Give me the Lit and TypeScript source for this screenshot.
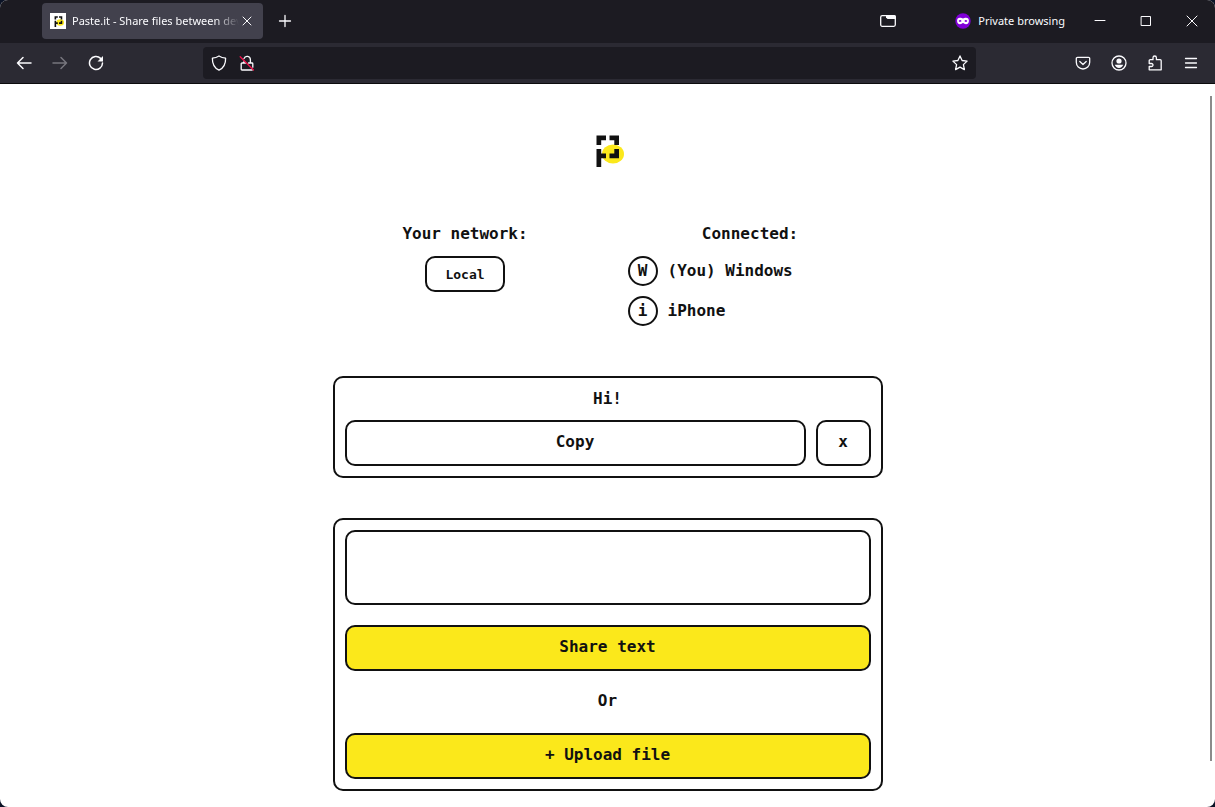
import { LitElement, html, css, svg } from "lit";
import { customElement, property, state } from "lit/decorators.js";

const markShapes = svg`
  <ellipse cx="17" cy="19" rx="11" ry="9.500" fill="#fbe81b"/>
  <path fill="#111" d="M.5.5H10v4.800H5.200V10H.5zM13.500.5H23V10h-4.700V5.300h-4.800zM.5 14h4.700v4.500H10v4.700H5.200V32H.5zM18.300 14H23v9.200h-9.500v-4.700h4.800z"/>`;

@customElement("paste-mark")
class PasteMark extends LitElement {
  static styles = css`
    :host { display: block; }
    .mark { display: block; width: 100%; height: 100%; overflow: visible; }
  `;
  render() {
    return html`<svg class="mark" viewBox="0 0 24 32" aria-hidden="true">${markShapes}</svg>`;
  }
}

@customElement("browser-bar")
class BrowserBar extends LitElement {
  @property() pageTitle = "";

  static styles = css`
    :host {
      display: block;
      color: #fbfbfe;
      font: 12px/16px "Noto Sans", "Open Sans", sans-serif;
    }
    button {
      display: grid;
      place-items: center;
      border: 0;
      padding: 0;
      background: none;
      color: inherit;
      font: inherit;
    }
    svg { display: block; fill: none; stroke: currentColor; stroke-width: 1.3; stroke-linecap: round; stroke-linejoin: round; }
    .tabs { display: flex; align-items: center; height: 42px; padding: 0 0 1px 42px; background: #1c1b22; }
    .tab {
      display: flex;
      align-items: center;
      box-sizing: border-box;
      width: 221px;
      height: 36px;
      padding: 0 8px;
      border-radius: 4px;
      background: #42414d;
    }
    .favicon { display: grid; place-items: center; flex: none; width: 16px; height: 16px; background: #fff; }
    .favicon paste-mark { width: 9px; height: 11px; }
    .title {
      flex: 1;
      min-width: 0;
      margin-left: 6px;
      overflow: hidden;
      white-space: nowrap;
      font-size: 11px;
      mask-image: linear-gradient(to left, transparent, #000 24px);
    }
    .close { width: 16px; height: 16px; }
    .new { width: 44px; height: 36px; }
    .space { flex: 1; }
    .list { width: 32px; height: 36px; margin-right: 51px; }
    .private { display: flex; align-items: center; gap: 7px; margin-right: 12px; font-size: 11px; }
    .window { width: 46px; height: 42px; }
    .tools {
      display: flex;
      align-items: center;
      height: 40px;
      padding: 0 6px;
      border-bottom: 1px solid #0c0c0d;
      background: #2b2a33;
    }
    .tool { width: 36px; height: 32px; }
    .dim { color: #77767e; }
    .address {
      display: flex;
      align-items: center;
      flex: 1;
      height: 32px;
      margin: 0 89px;
      padding: 0 2px;
      border-radius: 4px;
      background: #1c1b22;
    }
    .small { width: 28px; height: 28px; }
    .url { flex: 1; min-width: 0; border: 0; outline: 0; background: none; color: inherit; font: inherit; }
    .thin { stroke-width: 1; }
    .thick { stroke-width: 1.5; }
  `;

  render() {
    return html`
      <div class="tabs">
        <div class="tab">
          <span class="favicon"><paste-mark></paste-mark></span>
          <span class="title">${this.pageTitle}</span>
          <button class="close" aria-label="Close tab">
            <svg width="16" height="16"><path class="thin" d="M4 4l8 8M12 4l-8 8"/></svg>
          </button>
        </div>
        <button class="new" aria-label="New tab">
          <svg width="16" height="16"><path d="M8 2.500v11M2.500 8h11"/></svg>
        </button>
        <span class="space"></span>
        <button class="list" aria-label="List all tabs">
          <svg width="16" height="16"><rect x=".7" y="2.700" width="14.600" height="10.600" rx="1.500"/><path fill="currentColor" stroke="none" d="M6 2h8a2 2 0 0 1 2 2v2H7.500L6 4.500z"/></svg>
        </button>
        <span class="private">
          <svg width="16" height="16"><circle cx="8" cy="8" r="7.700" fill="#8000d7" stroke="none"/><path fill="#fff" fill-rule="evenodd" stroke="none" d="M5 4.800c1.300 0 2.100.7 3 .7s1.700-.7 3-.7c2 0 2.900 1.200 2.900 3 0 2-1.100 3.400-2.900 3.400-1.400 0-2.100-1.300-3-1.300s-1.600 1.300-3 1.300c-1.800 0-2.900-1.400-2.900-3.400 0-1.800.9-3 2.900-3zM3.600 8c.5.700 1 .9 1.500.9S6.200 8.700 6.500 8c-.3-.7-.9-.9-1.400-.9S4 7.300 3.600 8zm5.900 0c.3.700.9.900 1.400.9s1-.2 1.500-.9c-.5-.7-1-.9-1.500-.9s-1.100.2-1.400.9z"/></svg>
          Private browsing
        </span>
        <button class="window" aria-label="Minimize">
          <svg width="12" height="12"><path class="thin" d="M1 5.500h10"/></svg>
        </button>
        <button class="window" aria-label="Maximize">
          <svg width="12" height="12"><path class="thin" d="M1.500 1.500h9v9h-9z"/></svg>
        </button>
        <button class="window" aria-label="Close window">
          <svg width="12" height="12"><path class="thin" d="M1 1l10 10M11 1L1 11"/></svg>
        </button>
      </div>
      <div class="tools">
        <button class="tool" aria-label="Back">
          <svg width="16" height="16"><path class="thick" d="M15 8H1.500M7 2.500L1.500 8 7 13.500"/></svg>
        </button>
        <button class="tool dim" aria-label="Forward">
          <svg width="16" height="16"><path class="thick" d="M1 8h13.500M9 2.500L14.500 8 9 13.500"/></svg>
        </button>
        <button class="tool" aria-label="Reload">
          <svg width="16" height="16"><path class="thick" d="M12.600 3.400A6.500 6.500 0 1 0 14.500 8"/><path fill="currentColor" stroke="none" d="M15 1v5.500H9.500z"/></svg>
        </button>
        <div class="address">
          <button class="small" aria-label="Tracking protection">
            <svg width="16" height="16"><path d="M8 1c2 1.300 4.300 2 6.600 2.200C14.800 8.800 12.500 13 8 15.200 3.500 13 1.200 8.800 1.400 3.200 3.700 3 6 2.300 8 1z"/></svg>
          </button>
          <button class="small" aria-label="Connection is not secure">
            <svg width="16" height="16"><path d="M6.500 8H3a.8.8 0 0 0-.8.8v5.400c0 .4.400.8.8.8h10.200M9.500 8H13c.4 0 .8.400.8.800v3.400M4.700 8V6.800M5 3.600a3.300 3.300 0 0 1 6.400 1.100V8"/><path stroke="#f0134c" d="M1.200 1.800L14.500 15"/></svg>
          </button>
          <input class="url" type="text" aria-label="Address" />
          <button class="small" aria-label="Bookmark this page">
            <svg width="16" height="16"><path d="M8 .9l2.100 4.600 5 .6-3.700 3.500 1 5L8 12.100l-4.400 2.500 1-5L.9 6.100l5-.6z"/></svg>
          </button>
        </div>
        <button class="tool" aria-label="Save to Pocket">
          <svg width="16" height="16"><path d="M2.500 2.300h11a1.200 1.200 0 0 1 1.200 1.200v3.800a6.700 6.700 0 0 1-13.400 0V3.500a1.200 1.200 0 0 1 1.200-1.200zM4.800 6.500L8 9.500l3.200-3"/></svg>
        </button>
        <button class="tool" aria-label="Account">
          <svg width="16" height="16"><circle cx="8" cy="8" r="7"/><circle cx="8" cy="6" r="2.600" fill="currentColor" stroke="none"/><path fill="currentColor" stroke="none" d="M3.800 9.800h8.400c-.6 2-2.100 3.100-4.200 3.100S4.400 11.800 3.800 9.800z"/></svg>
        </button>
        <button class="tool" aria-label="Extensions">
          <svg width="16" height="16"><path d="M6 4.700V2.700a1.700 1.700 0 0 1 3.400 0v2h3.800a1 1 0 0 1 1 1v9.100H2.200v-3.300h2.300a1.500 1.500 0 0 0 0-3H2.200V5.700a1 1 0 0 1 1-1z"/></svg>
        </button>
        <button class="tool" aria-label="Menu">
          <svg width="16" height="16"><path d="M2.500 3.500h11M2.500 8h11M2.500 12.500h11"/></svg>
        </button>
      </div>
    `;
  }
}

@customElement("app-root")
class AppRoot extends LitElement {
  @state() private devices = [
    { initial: "W", name: "(You) Windows" },
    { initial: "i", name: "iPhone" },
  ];

  static styles = css`
    :host {
      display: block;
      background: #0b1326;
      color: #111;
      font: bold 16px/24px "DejaVu Sans Mono", monospace;
    }
    .frame {
      display: flex;
      flex-direction: column;
      min-height: 100vh;
      border-radius: 8px;
      overflow: hidden;
      background: #fff;
    }
    .page { position: relative; flex: 1; padding: 51px 0 16px; }
    .scroll { position: absolute; top: 12px; right: 3px; bottom: 46px; width: 2px; background: #8b8b8b; }
    .logo { width: 24px; height: 32px; margin: 0 auto; }
    .info {
      display: grid;
      grid-template-columns: 1fr 1fr;
      max-width: 570px;
      margin: 55px auto 50px;
    }
    h2 { margin: 0 0 10px; font: inherit; text-align: center; }
    .network { display: flex; flex-direction: column; align-items: center; }
    button, textarea {
      box-sizing: border-box;
      border: 2px solid #111;
      border-radius: 10px;
      background: #fff;
      color: inherit;
      font: inherit;
    }
    button { height: 46px; padding: 0 0 2px; }
    .local { width: 80px; height: 36px; padding: 2px 0 0; font-size: 13px; }
    .devices { display: flex; flex-direction: column; gap: 10px; margin: 0; padding: 0 0 0 20px; list-style: none; }
    .device { display: flex; align-items: center; gap: 10px; }
    .initial {
      display: grid;
      place-items: center;
      box-sizing: border-box;
      width: 30px;
      height: 30px;
      border: 2px solid #111;
      border-radius: 50%;
    }
    .card {
      display: flex;
      flex-direction: column;
      box-sizing: border-box;
      max-width: 550px;
      margin: 0 auto 40px;
      padding: 10px;
      border: 2px solid #111;
      border-radius: 10px;
    }
    .card:last-of-type { margin-bottom: 0; }
    p { margin: 0; text-align: center; line-height: 22px; }
    .message { padding-bottom: 10px; }
    .actions { display: flex; gap: 10px; }
    .copy { flex: 1; }
    .remove { width: 55px; }
    textarea { display: block; width: 100%; height: 75px; margin-bottom: 20px; padding: 8px; resize: none; }
    .yellow { background: #fbe81b; }
    .or { padding: 19px 0 21px; }
  `;

  render() {
    return html`
      <div class="frame">
        <browser-bar pageTitle="Paste.it - Share files between devices"></browser-bar>
        <main class="page">
          <paste-mark class="logo"></paste-mark>
          <div class="info">
            <section class="network">
              <h2>Your network:</h2>
              <button class="local">Local</button>
            </section>
            <section>
              <h2>Connected:</h2>
              <ul class="devices">
                ${this.devices.map(
                  (d) => html`<li class="device"><span class="initial">${d.initial}</span><span>${d.name}</span></li>`
                )}
              </ul>
            </section>
          </div>
          <section class="card">
            <p class="message">Hi!</p>
            <div class="actions">
              <button class="copy">Copy</button>
              <button class="remove">x</button>
            </div>
          </section>
          <section class="card">
            <textarea aria-label="Text to share"></textarea>
            <button class="yellow">Share text</button>
            <p class="or">Or</p>
            <button class="yellow">+ Upload file</button>
          </section>
          <div class="scroll"></div>
        </main>
      </div>
    `;
  }
}
